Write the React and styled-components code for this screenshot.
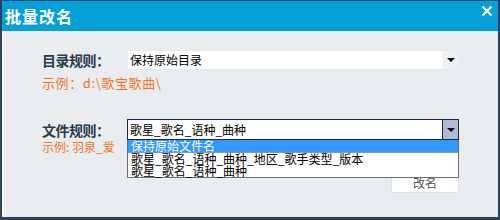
import React from "react";
import styled, { createGlobalStyle } from "styled-components";

const Global = createGlobalStyle`
  html, body { margin: 0; padding: 0; background: #e9edf0; }
  body { font-family: "Noto Sans CJK SC", "Noto Sans", sans-serif; }
`;

const Window = styled.div`
  width: 500px;
  height: 220px;
  box-sizing: border-box;
  display: flex;
  flex-direction: column;
  border: 2px solid #2b4259;
  border-top: 1px solid #1e4a72;
  border-bottom-width: 3px;
  background: #e9edf0;
  overflow: hidden;
`;

const TitleBar = styled.div`
  height: 30px;
  flex: none;
  background: #05a0d8;
  display: flex;
  align-items: center;
  justify-content: space-between;
  padding: 0 7px 0 5px;
  margin: 0 -2px;
`;

const Title = styled.div`
  color: #fff;
  font-weight: 700;
  font-size: 16px;
  letter-spacing: 1px;
  line-height: 30px;
`;

const Close = styled.div`
  width: 12px;
  height: 12px;
  margin-bottom: 10px;
  display: flex;
`;

const Body = styled.div`
  flex: 1;
  position: relative;
  padding: 19px 39px 0 38px;
  border-left: 2px solid #f4f6f8;
  display: flex;
  flex-direction: column;
`;

const Row = styled.div`
  display: flex;
  align-items: center;
  height: ${(p) => p.$h}px;
  margin-top: ${(p) => p.$mt || 0}px;
`;

const Label = styled.div`
  width: 85px;
  flex: none;
  font-size: 14px;
  font-weight: 700;
  color: #2c3b4d;
  line-height: 20px;
  letter-spacing: -0.5px;
`;

const SelectWrap = styled.div`
  position: relative;
  flex: 1;
  height: 100%;
`;

const SelectBox = styled.div`
  box-sizing: border-box;
  height: 100%;
  display: flex;
  align-items: center;
  background: #fff;
  border: 1px solid ${(p) => (p.$focused ? "#1d2650" : "#e6eaee")};
`;

const SelectText = styled.div`
  flex: 1;
  padding-left: 2px;
  font-size: 12px;
  color: #000;
  line-height: 16px;
`;

const Arrow = styled.div`
  width: 15px;
  height: 100%;
  flex: none;
  display: flex;
  align-items: center;
  justify-content: center;
  background: ${(p) => (p.$focused ? "#b3bbd3" : "#eef0f2")};
  border-left: 1px solid ${(p) => (p.$focused ? "#1d2650" : "#f4f5f6")};
  &::after {
    content: "";
    border-left: 4px solid transparent;
    border-right: 4px solid transparent;
    border-top: 4px solid #000;
  }
`;

const Example = styled.div`
  font-size: ${(p) => (p.$wide ? 13 : 12)}px;
  letter-spacing: ${(p) => (p.$wide ? "0.6px" : "0")};
  color: #f0772a;
  line-height: 14px;
  white-space: nowrap;
  margin-top: ${(p) => p.$mt || 0}px;
`;

const List = styled.div`
  position: absolute;
  left: 0;
  right: 0;
  top: 100%;
  z-index: 2;
  background: #fff;
  border: 1px solid #67717c;
  border-top: none;
`;

const Item = styled.div`
  height: 12px;
  line-height: 12px;
  font-size: 12px;
  padding-left: 3px;
  color: ${(p) => (p.$active ? "#fff" : "#000")};
  background: ${(p) => (p.$active ? "#3399ff" : "#fff")};
  white-space: nowrap;
  border-bottom: ${(p) => (p.$active ? "1px solid #8a96a8" : "none")};
`;

const Footer = styled.div`
  display: flex;
  justify-content: flex-end;
  margin-top: 18px;
`;

const Button = styled.div`
  width: 68px;
  height: 21px;
  box-sizing: border-box;
  background: #fff;
  border: 1px solid #dfe3e7;
  border-radius: 2px;
  display: flex;
  align-items: center;
  justify-content: center;
  font-size: 12px;
  color: #555;
`;

export default function App() {
  return (
    <>
      <Global />
      <Window>
        <TitleBar>
          <Title>批量改名</Title>
          <Close>
            <svg width="12" height="12" viewBox="0 0 12 12">
              <path d="M1.5 1.5 L10.5 10.5 M10.5 1.5 L1.5 10.5" stroke="#fff" strokeWidth="2.2" />
            </svg>
          </Close>
        </TitleBar>
        <Body>
          <Row $h={20}>
            <Label>目录规则：</Label>
            <SelectWrap>
              <SelectBox>
                <SelectText>保持原始目录</SelectText>
                <Arrow />
              </SelectBox>
            </SelectWrap>
          </Row>
          <Example $mt={6} $wide>示例：d:\歌宝歌曲\</Example>
          <Row $h={21} $mt={29}>
            <Label>文件规则：</Label>
            <SelectWrap>
              <SelectBox $focused>
                <SelectText>歌星_歌名_语种_曲种</SelectText>
                <Arrow $focused />
              </SelectBox>
              <List>
                <Item $active>保持原始文件名</Item>
                <Item>歌星_歌名_语种_曲种_地区_歌手类型_版本</Item>
                <Item>歌星_歌名_语种_曲种</Item>
              </List>
            </SelectWrap>
          </Row>
          <Example>示例: 羽泉_爱</Example>
          <Footer>
            <Button>改名</Button>
          </Footer>
        </Body>
      </Window>
    </>
  );
}
